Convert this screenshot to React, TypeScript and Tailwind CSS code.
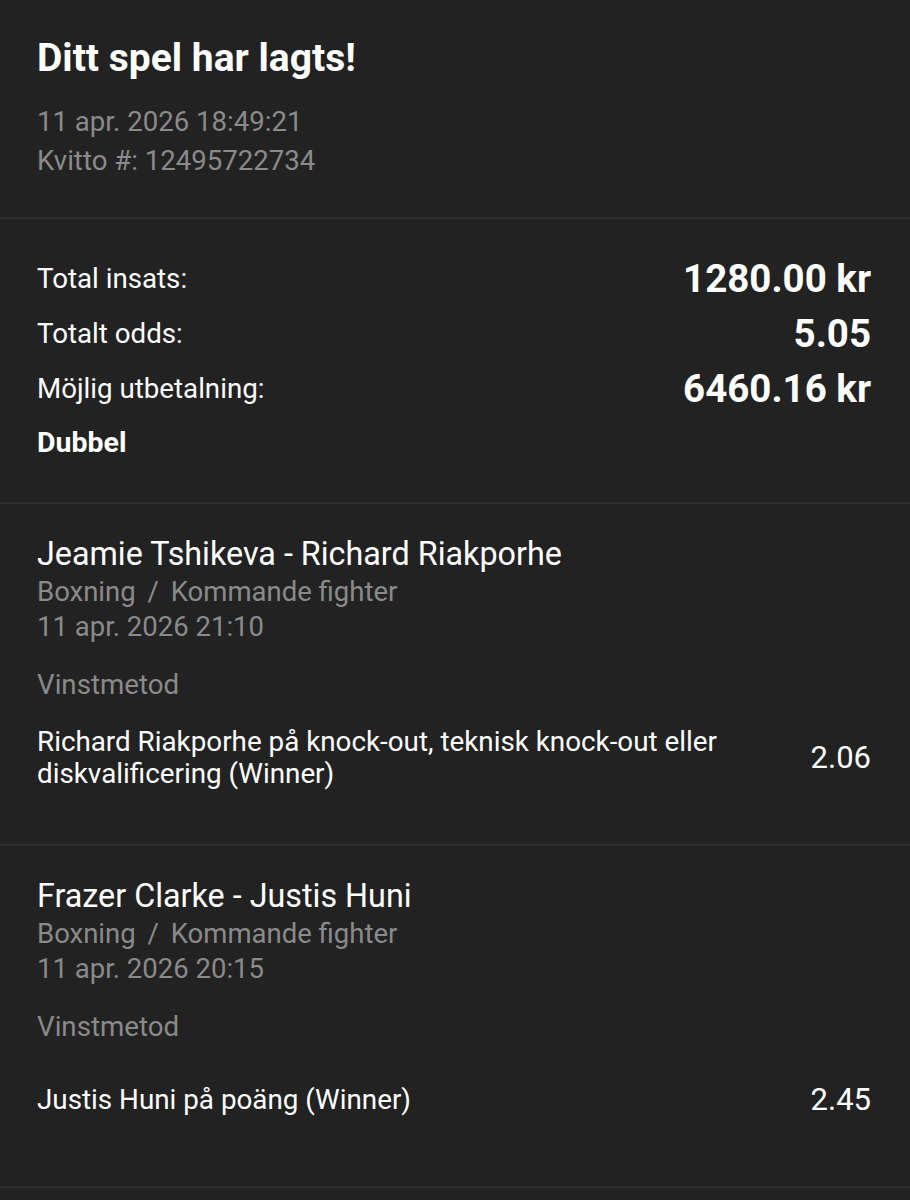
const legs = [
  {
    match: 'Jeamie Tshikeva - Richard Riakporhe',
    date: '11 apr. 2026 21:10',
    market: 'Vinstmetod',
    pick: 'Richard Riakporhe på knock-out, teknisk knock-out eller diskvalificering (Winner)',
    odds: '2.06',
  },
  {
    match: 'Frazer Clarke - Justis Huni',
    date: '11 apr. 2026 20:15',
    market: 'Vinstmetod',
    pick: 'Justis Huni på poäng (Winner)',
    odds: '2.45',
  },
];

const totals = [
  { label: 'Total insats:', value: '1280.00 kr' },
  { label: 'Totalt odds:', value: '5.05' },
  { label: 'Möjlig utbetalning:', value: '6460.16 kr' },
];

const Divider = () => <div className="h-[2px] bg-[#2d2d2d]" />;

export default function App() {
  return (
    <div
      className="min-h-[1200px] bg-[#222222] text-white"
      style={{ fontFamily: 'Roboto, "Noto Sans", sans-serif' }}
    >
      {/* kvittohuvud */}
      <div className="pl-[37px] pr-[39px] pt-[34px] pb-[37px]">
        <h1 className="text-[39px] leading-[48px] font-bold">Ditt spel har lagts!</h1>
        <div className="mt-[20px] text-[27.6px] leading-[39px] text-[#8a8a8a]">
          <div>11 apr. 2026 18:49:21</div>
          <div>Kvitto #: 12495722734</div>
        </div>
      </div>
      <Divider />

      {/* summering */}
      <div className="pl-[37px] pr-[39px] pt-[32px] pb-[31px]">
        {totals.map((t) => (
          <div key={t.label} className="flex h-[55px] items-center justify-between">
            <span className="text-[27.7px]">{t.label}</span>
            <span className="text-[38.5px] font-bold">{t.value}</span>
          </div>
        ))}
        <div className="flex h-[55px] items-center text-[28.5px] font-bold">Dubbel</div>
      </div>
      <Divider />

      {legs.map((leg) => (
        <div key={leg.match}>
          <div className="pl-[37px] pr-[39px] pt-[30px] pb-[38px]">
            <div className="text-[32.3px] leading-[40px]">{leg.match}</div>
            <div className="text-[27.5px] leading-[35px] text-[#8a8a8a]">
              <div>
                Boxning <span className="mx-[5px]">/</span> Kommande fighter
              </div>
              <div>{leg.date}</div>
            </div>
            <div className="mt-[23px] text-[27.7px] leading-[35px] text-[#8a8a8a]">{leg.market}</div>
            <div className="mt-[8px] flex min-h-[96px] items-center justify-between gap-8">
              <span className="max-w-[700px] text-[27.8px] leading-[32px]">{leg.pick}</span>
              <span className="text-[31px]">{leg.odds}</span>
            </div>
          </div>
          <Divider />
        </div>
      ))}
    </div>
  );
}
